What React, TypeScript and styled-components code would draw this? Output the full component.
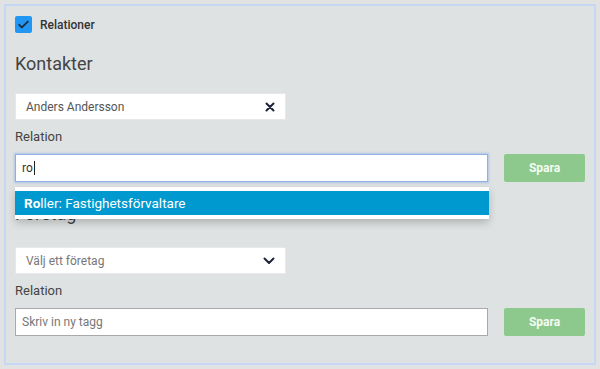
import styled, { createGlobalStyle } from 'styled-components';

const GlobalStyle = createGlobalStyle`
  html, body {
    margin: 0;
    padding: 0;
    background: #e1e3e3;
    font-family: Roboto, 'Liberation Sans', Arial, sans-serif;
  }
`;

const Page = styled.div`
  width: 600px;
  height: 369px;
  padding: 4px;
  box-sizing: border-box;
`;

const Panel = styled.div`
  height: 361px;
  box-sizing: border-box;
  border: 2px solid #c6d7f6;
  background: #dfe2e2;
  padding: 10px 9px 0 9px;
  display: flex;
  flex-direction: column;
`;

const CheckRow = styled.label`
  display: flex;
  align-items: center;
  gap: 8px;
  height: 17px;
  color: #333;
  font-size: 12px;
  font-weight: 500;
`;

const CheckBox = styled.span`
  width: 17px;
  height: 17px;
  border-radius: 2px;
  background: #2196f3;
  display: flex;
  align-items: center;
  justify-content: center;
`;

const Heading = styled.h2<{ $top: number }>`
  margin: ${(p) => p.$top}px 0 0;
  font-size: 18px;
  font-weight: 400;
  color: #444;
  line-height: 22px;
`;

const Label = styled.div`
  margin-top: 8px;
  font-size: 13px;
  color: #444;
  line-height: 18px;
`;

const ShortBox = styled.div<{ $top: number }>`
  margin-top: ${(p) => p.$top}px;
  width: 271px;
  height: 27px;
  box-sizing: border-box;
  background: #fff;
  border: 1px solid #e6e8ea;
  display: flex;
  align-items: center;
  justify-content: space-between;
  padding: 0 10px 0 10px;
  font-size: 12px;
  color: #555;
`;

const Placeholder = styled.span`
  color: #777;
`;

const Row = styled.div`
  margin-top: 8px;
  display: flex;
  gap: 16px;
  position: relative;
`;

const TextField = styled.div<{ $focused?: boolean }>`
  width: 474px;
  height: 28px;
  box-sizing: border-box;
  background: #fff;
  border: 1px solid ${(p) => (p.$focused ? '#8fb0e6' : '#a9a9a9')};
  box-shadow: ${(p) => (p.$focused ? '0 0 2px 1px rgba(120,160,230,0.45)' : 'none')};
  display: flex;
  align-items: center;
  padding: 0 6px;
  font-size: 12px;
  color: #333;
`;

const Caret = styled.span`
  display: inline-block;
  width: 1px;
  height: 14px;
  background: #222;
  margin-left: 1px;
`;

const SaveButton = styled.button`
  width: 81px;
  height: 28px;
  border: none;
  border-radius: 2px;
  background: #8dc98c;
  color: #f4fbf3;
  font-family: inherit;
  font-size: 12px;
  font-weight: 700;
  padding: 0;
`;

const Menu = styled.div`
  position: absolute;
  left: 0;
  top: 33px;
  width: 474px;
  background: #fff;
  padding: 4px 0;
  box-shadow: 0 4px 8px rgba(0, 0, 0, 0.2);
  z-index: 2;
`;

const MenuItem = styled.div`
  height: 24px;
  background: #0099cf;
  color: #fff;
  font-size: 13.5px;
  display: flex;
  align-items: center;
  padding-left: 9px;
  b {
    font-weight: 700;
  }
`;

const App = () => {
  return (
    <>
      <GlobalStyle />
      <Page>
        <Panel>
          <CheckRow>
            <CheckBox>
              <svg width="13" height="13" viewBox="0 0 24 24">
                <path
                  d="M4 12.5l5 5L20 6.5"
                  fill="none"
                  stroke="#1c2a3a"
                  strokeWidth="3.2"
                  strokeLinecap="round"
                  strokeLinejoin="round"
                />
              </svg>
            </CheckBox>
            Relationer
          </CheckRow>

          <Heading $top={20}>Kontakter</Heading>

          <ShortBox $top={18}>
            Anders Andersson
            <svg width="10" height="10" viewBox="0 0 10 10">
              <path d="M1.5 1.5l7 7M8.5 1.5l-7 7" stroke="#1f2238" strokeWidth="2" strokeLinecap="round" />
            </svg>
          </ShortBox>

          <Label>Relation</Label>

          <Row>
            <TextField $focused>
              ro
              <Caret />
            </TextField>
            <SaveButton>Spara</SaveButton>
            <Menu>
              <MenuItem>
                <span>
                  <b>Ro</b>ller: Fastighetsförvaltare
                </span>
              </MenuItem>
            </Menu>
          </Row>

          <Heading $top={21}>Företag</Heading>

          <ShortBox $top={22}>
            <Placeholder>Välj ett företag</Placeholder>
            <svg width="12" height="8" viewBox="0 0 12 8">
              <path d="M1.5 1.5L6 6l4.5-4.5" fill="none" stroke="#1f2238" strokeWidth="2" strokeLinecap="round" strokeLinejoin="round" />
            </svg>
          </ShortBox>

          <Label>Relation</Label>

          <Row>
            <TextField>
              <Placeholder>Skriv in ny tagg</Placeholder>
            </TextField>
            <SaveButton>Spara</SaveButton>
          </Row>
        </Panel>
      </Page>
    </>
  );
};

export default App;
